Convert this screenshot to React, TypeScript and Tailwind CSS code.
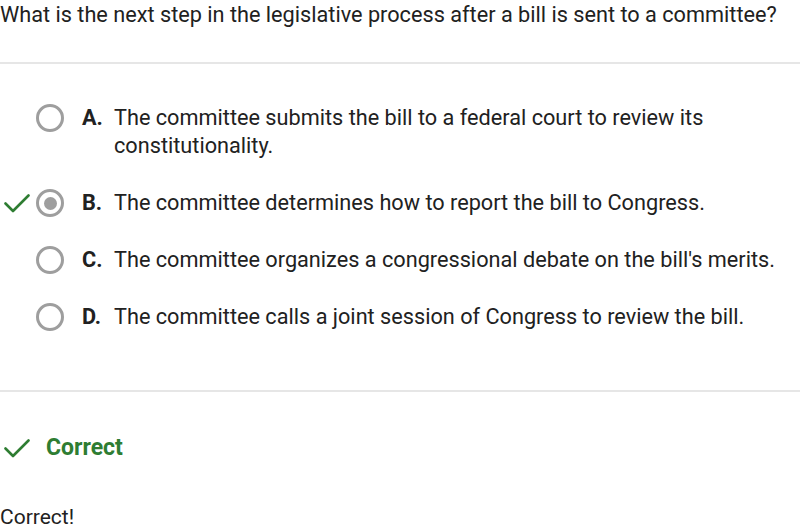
interface Option {
  letter: string;
  text: string;
  selected?: boolean;
}

const options: Option[] = [
  {
    letter: "A.",
    text: "The committee submits the bill to a federal court to review its constitutionality.",
  },
  { letter: "B.", text: "The committee determines how to report the bill to Congress.", selected: true },
  { letter: "C.", text: "The committee organizes a congressional debate on the bill's merits." },
  { letter: "D.", text: "The committee calls a joint session of Congress to review the bill." },
];

function CheckMark() {
  return (
    <svg width="26" height="19" viewBox="0 0 26 19" fill="none">
      <path d="M1.5 9.5 L9 17 L24.5 1.5" stroke="#2e7d32" strokeWidth="2.6" strokeLinecap="round" strokeLinejoin="round" />
    </svg>
  );
}

function Radio({ selected }: { selected?: boolean }) {
  return (
    <div className="w-[28px] h-[28px] rounded-full border-[3px] border-[#9e9e9e] flex items-center justify-center bg-white">
      {selected && <div className="w-[13px] h-[13px] rounded-full bg-[#9e9e9e]" />}
    </div>
  );
}

export default function App() {
  return (
    <div className="w-[800px] h-[529px] bg-white text-[#212121] font-['Roboto',sans-serif] overflow-hidden">
      <h1 className="text-[21.7px] leading-[30px] pb-[32px] whitespace-nowrap">
        What is the next step in the legislative process after a bill is sent to a committee?
      </h1>
      <div className="h-[2px] bg-[#e6e6e6]" />

      <div className="pt-[40px] flex flex-col gap-[29px]">
        {options.map((opt) => (
          <div key={opt.letter} className="flex items-start">
            <div className="w-[36px] h-[28px] pl-[4px] flex items-center">
              {opt.selected && <CheckMark />}
            </div>
            <Radio selected={opt.selected} />
            <div className="ml-[18px] w-[32px] font-bold text-[21.7px] leading-[28px]">{opt.letter}</div>
            <div className="w-[680px] text-[21.7px] leading-[28px]">{opt.text}</div>
          </div>
        ))}
      </div>

      <div className="mt-[59px] h-[2px] bg-[#e6e6e6]" />

      <div className="flex items-center h-[30px] mt-[41px]">
        <div className="pl-[4px]">
          <CheckMark />
        </div>
        <span className="ml-[16px] text-[23px] leading-[30px] font-bold text-[#2e7d32]">Correct</span>
      </div>

      <p className="mt-[40px] text-[21px] leading-[28px]">Correct!</p>
    </div>
  );
}
